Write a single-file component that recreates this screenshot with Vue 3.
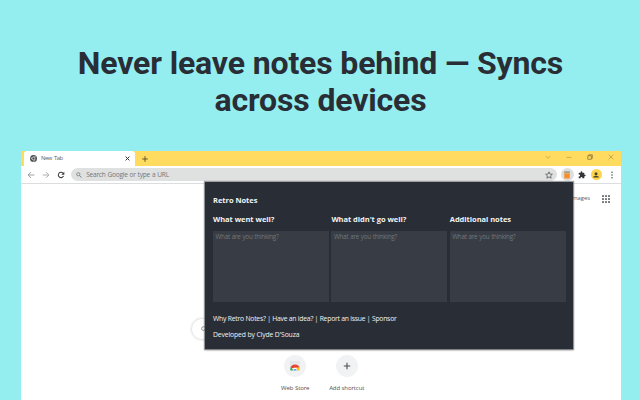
<script setup>
const columns = ['What went well?', "What didn't go well?", 'Additional notes']
const dots = [0, 1, 2, 3, 4, 5, 6, 7, 8]
</script>

<template>
  <main class="promo">
    <h1>Never leave notes behind — Syncs<br />across devices</h1>
    <section class="browser">
      <div class="tabs">
        <div class="tab">
          <svg class="globe" viewBox="0 0 16 16">
            <circle cx="8" cy="8" r="8" fill="#4c4f53" />
            <path d="M8 4h6.5M4.6 10 1.5 4.5M11.4 10 8 15.8" stroke="#e8e8e8" stroke-width="1.3" />
            <circle cx="8" cy="8" r="3.3" fill="#4c4f53" stroke="#f5f5f5" stroke-width="1.5" />
          </svg>
          <span class="tab-title">New Tab</span>
          <svg class="close" viewBox="0 0 5 5"><path d="M.6.6l3.8 3.8M4.4.6.6 4.4" stroke="#333" stroke-width="1" /></svg>
        </div>
        <svg class="plus" viewBox="0 0 6 6"><path d="M3 .2v5.6M.2 3h5.6" stroke="#5b4f2a" stroke-width=".9" /></svg>
        <div class="window-buttons">
          <svg viewBox="0 0 6 6"><path d="M.7 2 3 4.3 5.3 2" fill="none" stroke="#b39a4b" stroke-width=".7" /></svg>
          <svg viewBox="0 0 6 6"><path d="M.6 3.4h4.8" stroke="#b39a4b" stroke-width=".7" /></svg>
          <svg viewBox="0 0 6 6"><path d="M.8 1.8h3.5v3.5H.8zM1.8 1.8V.8h3.5v3.5h-1" fill="none" stroke="#7d6b31" stroke-width=".7" /></svg>
          <svg viewBox="0 0 6 6"><path d="M.7.7l4.6 4.6M5.3.7.7 5.3" stroke="#a08940" stroke-width=".6" /></svg>
        </div>
      </div>
      <div class="toolbar">
        <svg class="nav" viewBox="0 0 8 8"><path d="M7.3 4H1.2M4 1.1 1.1 4 4 6.9" fill="none" stroke="#929598" stroke-width=".9" /></svg>
        <svg class="nav forward" viewBox="0 0 8 8"><path d="M.7 4h6.1M4 1.1 6.9 4 4 6.9" fill="none" stroke="#a6a8ab" stroke-width=".9" /></svg>
        <svg class="nav reload" viewBox="0 0 8 8">
          <path d="M6.5 5A2.7 2.7 0 1 1 6 2.1" fill="none" stroke="#3b3d40" stroke-width="1.05" />
          <path d="M7.3.7v3H4.3z" fill="#3b3d40" />
        </svg>
        <div class="address">
          <svg class="search" viewBox="0 0 7 7"><circle cx="2.7" cy="2.7" r="1.9" fill="none" stroke="#66696d" stroke-width=".8" /><path d="m4.1 4.1 2.4 2.4" stroke="#66696d" stroke-width=".9" /></svg>
          <span>Search Google or type a URL</span>
          <svg class="star" viewBox="0 0 16 16"><path d="m8 1.7 1.9 4.4 4.8.4-3.6 3.2 1.1 4.7L8 11.9l-4.2 2.5 1.1-4.7L1.3 6.5l4.8-.4z" fill="none" stroke="#55585c" stroke-width="1.6" /></svg>
        </div>
        <div class="extensions">
          <div class="note-button">
            <svg viewBox="0 0 6 8"><path d="M.3 1h5.4v6.5H.3z" fill="#fb8c28" /><path d="M.3.7h5.4v2.2H.3z" fill="#dfb16b" /><path d="M.3.5h5.4v1H.3z" fill="#758b94" /></svg>
          </div>
          <div class="puzzle-button">
            <svg viewBox="0 0 24 24"><path fill="#33363a" d="M20.5 11H19V7c0-1.1-.9-2-2-2h-4V3.5a2.5 2.5 0 0 0-5 0V5H4c-1.1 0-2 .9-2 2v3.8h1.5a2.7 2.7 0 0 1 0 5.4H2V20c0 1.1.9 2 2 2h3.8v-1.5a2.7 2.7 0 0 1 5.4 0V22H17c1.1 0 2-.9 2-2v-4h1.5a2.5 2.5 0 0 0 0-5z" /></svg>
          </div>
          <div class="profile">
            <svg viewBox="0 0 8 8"><circle cx="4" cy="2.7" r="1.5" fill="#4d4428" /><path d="M1.2 6.6v-.8Q4 3.9 6.8 5.8v.8z" fill="#4d4428" /></svg>
          </div>
          <svg class="menu" viewBox="0 0 2 8"><circle cx="1" cy="1.2" r=".75" /><circle cx="1" cy="4" r=".75" /><circle cx="1" cy="6.8" r=".75" /></svg>
        </div>
      </div>
      <div class="page">
        <nav class="page-nav">
          <span>Images</span>
          <div class="apps"><i v-for="dot in dots" :key="dot"></i></div>
        </nav>
        <div class="search-box">
          <svg viewBox="0 0 7 7"><circle cx="2.9" cy="3" r="2.2" fill="none" stroke="#777" stroke-width=".9" /><path d="m4.6 4.6 2 2" stroke="#777" stroke-width=".8" /></svg>
        </div>
        <div class="shortcuts">
          <div class="shortcut">
            <div class="disc">
              <svg class="store" viewBox="0 0 10 10">
                <path d="M0 0h10v9H0z" fill="#e6e7e9" />
                <path d="M.6 6.7a4.6 4.6 0 0 1 8.8 0L5 7.5z" fill="#e84435" />
                <path d="M.8 6.1 3.4 9.6H.5A5 5 0 0 1 .8 6.1z" fill="#32a853" />
                <path d="M6 6.5h3.3a5 5 0 0 1 .2 3.1H6z" fill="#fbc116" />
                <circle cx="5" cy="8.4" r="1.9" fill="#fff" />
                <path d="M3.3 9.6a1.7 1.7 0 1 1 3.4 0z" fill="#4285f4" />
              </svg>
            </div>
            <span>Web Store</span>
          </div>
          <div class="shortcut">
            <div class="disc">
              <svg class="add" viewBox="0 0 8 8"><path d="M4 .8v6.4M.8 4h6.4" stroke="#4a4d51" stroke-width="1.1" /></svg>
            </div>
            <span>Add shortcut</span>
          </div>
        </div>
      </div>
      <aside class="popup">
        <h2>Retro Notes</h2>
        <div class="columns">
          <div v-for="title in columns" :key="title" class="column">
            <h3>{{ title }}</h3>
            <div class="note">What are you thinking?</div>
          </div>
        </div>
        <p class="links">Why Retro Notes? | Have an idea? | Report an issue | Sponsor</p>
        <p class="author">Developed by Clyde D'Souza</p>
      </aside>
    </section>
  </main>
</template>

<style>
body { margin: 0; overflow: hidden; }
</style>

<style scoped>
* { box-sizing: border-box; }
svg { display: block; flex: none; }
.promo { width: 640px; height: 400px; overflow: hidden; background: #94eeef; font-family: "Open Sans", "Noto Sans", sans-serif; }
h1 { height: 151px; margin: 0; padding: 45px 0 0 1px; text-align: center; font: 700 32px/37px Roboto, sans-serif; letter-spacing: -.14px; color: #292d36; white-space: nowrap; }
.browser { position: relative; width: 600px; height: 249px; margin-left: 21px; background: #fff; }
.tabs { display: flex; align-items: flex-start; height: 15px; padding-left: 3px; background: #ffdc60; }
.tab { display: flex; align-items: center; width: 111px; height: 15px; padding: 0 5px 0 6px; background: #fff; border-radius: 3px 3px 0 0; }
.globe { width: 7px; height: 7px; }
.tab-title { margin-left: 4px; font-size: 5.8px; line-height: 15px; letter-spacing: -.4px; word-spacing: .9px; color: #5b5e62; white-space: nowrap; }
.close { width: 5px; height: 5px; margin-left: auto; }
.plus { width: 6px; height: 6px; margin: 4.5px 0 0 7px; }
.window-buttons { display: flex; gap: 15px; margin: 3.2px 7.5px 0 auto; }
.window-buttons svg { width: 6px; height: 6px; }
.toolbar { display: flex; align-items: center; height: 18px; padding: 0 6px; border-bottom: 1px solid #dcdddf; background: #fff; }
.nav { width: 8px; height: 8px; }
.forward { margin-left: 7px; }
.reload { margin-left: 7px; }
.address { display: flex; align-items: center; width: 486px; height: 13px; margin-left: 6px; padding: 0 4px 0 5px; border-radius: 7px; background: #dfe0e0; font-size: 6.6px; letter-spacing: -.26px; word-spacing: .5px; color: #73767a; }
.address span { margin-left: 4.2px; white-space: nowrap; }
.search { width: 6px; height: 6px; }
.star { width: 8px; height: 8px; margin-left: auto; }
.extensions { display: flex; align-items: center; margin-left: 3.5px; }
.note-button { display: grid; place-items: center; width: 13px; height: 13px; border-radius: 50%; background: #dddedf; }
.note-button svg { width: 6px; height: 8px; }
.puzzle-button { display: grid; place-items: center; width: 13px; height: 13px; margin-left: 1.5px; }
.puzzle-button svg { width: 8px; height: 8px; }
.profile { display: grid; place-items: center; width: 11px; height: 11px; margin-left: 2.5px; border-radius: 50%; background: #fcd54e; }
.profile svg { width: 8px; height: 8px; }
.menu { width: 2px; height: 8px; margin-left: 9px; fill: #45484b; }
.page { height: 216px; }
.page-nav { display: flex; justify-content: flex-end; align-items: center; height: 29px; padding-right: 11px; font-size: 5.8px; color: #55585c; }
.page-nav span { line-height: 8px; padding-bottom: 1px; }
.apps { display: grid; grid-template-columns: repeat(3, 2px); gap: 1px; margin-left: 12px; }
.apps i { width: 2px; height: 2px; background: #74777b; border-radius: 25%; }
.search-box { width: 218px; height: 22px; margin: 105px 0 0 170px; padding: 7px 9px; border: 1px solid #e6e7e9; border-radius: 11px; box-shadow: 0 0 2px #d6d8da; }
.search-box svg { width: 6px; height: 6px; }
.shortcuts { display: flex; margin: 15px 0 0 248.5px; }
.shortcut { display: flex; flex-direction: column; align-items: center; width: 51.5px; font-size: 6px; letter-spacing: -.08px; line-height: 8px; color: #4c4f53; white-space: nowrap; }
.disc { display: grid; place-items: center; width: 22px; height: 22px; margin-bottom: 7px; border-radius: 50%; background: #f1f2f3; }
.store { width: 10px; height: 10px; }
.add { width: 8px; height: 8px; }
.popup { position: absolute; left: 184px; top: 31px; width: 368px; height: 167px; padding: 13px 7px 0 8px; background: #292d36; color: #f2f3f4; box-shadow: 0 0 1px 1px rgba(80, 84, 88, .55), 0 1px 2px #999; }
h2, h3, p { margin: 0; font-size: 7.5px; line-height: 10px; letter-spacing: -.04px; white-space: nowrap; }
h2, h3 { font-weight: 700; }
.columns { display: grid; grid-template-columns: repeat(3, 116px); gap: 2.4px; margin-top: 9px; }
.note { height: 71px; margin-top: 7px; padding: 1px 2.5px; background: #383c44; color: #73767a; font-size: 6.3px; line-height: 9px; letter-spacing: -.26px; word-spacing: .5px; white-space: nowrap; }
.links { margin-top: 11.5px; font-size: 6.8px; letter-spacing: -.23px; }
.author { margin-top: 6.5px; font-size: 6.8px; letter-spacing: -.12px; }
</style>
